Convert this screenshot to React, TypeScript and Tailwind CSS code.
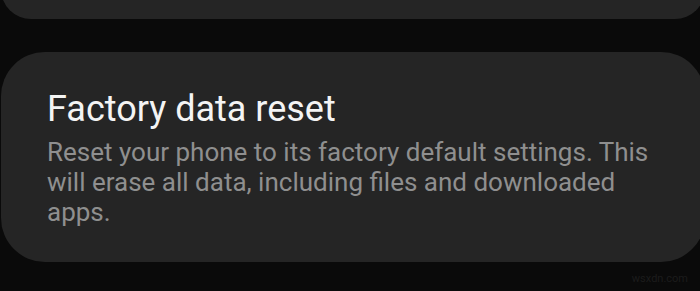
export default function App() {
  return (
    <div className="h-[291px] w-[700px] overflow-hidden bg-[#0a0a0a] font-['Roboto',sans-serif]">
      {/* previous settings card, only its bottom shows */}
      <div className="-mt-[41px] ml-px -mr-[5px] h-[60px] rounded-[44px] bg-[#252525]" />

      {/* factory data reset */}
      <div className="mt-[33px] ml-px -mr-[5px] rounded-[44px] bg-[#252525] pt-[35px] pb-[35px] pl-[46px] pr-[20px]">
        <h2 className="text-[36px] leading-[44px] font-normal text-[#f4f4f4]">Factory data reset</h2>
        <p className="mt-[6px] w-[620px] text-[26px] leading-[30px] text-[#8f8f8f]">
          Reset your phone to its factory default settings. This will erase all data, including files and downloaded apps.
        </p>
      </div>

      <div className="mt-[10px] pr-[12px] text-right text-[11px] leading-[14px] text-[#1c1c1c]">wsxdn.com</div>
    </div>
  );
}
